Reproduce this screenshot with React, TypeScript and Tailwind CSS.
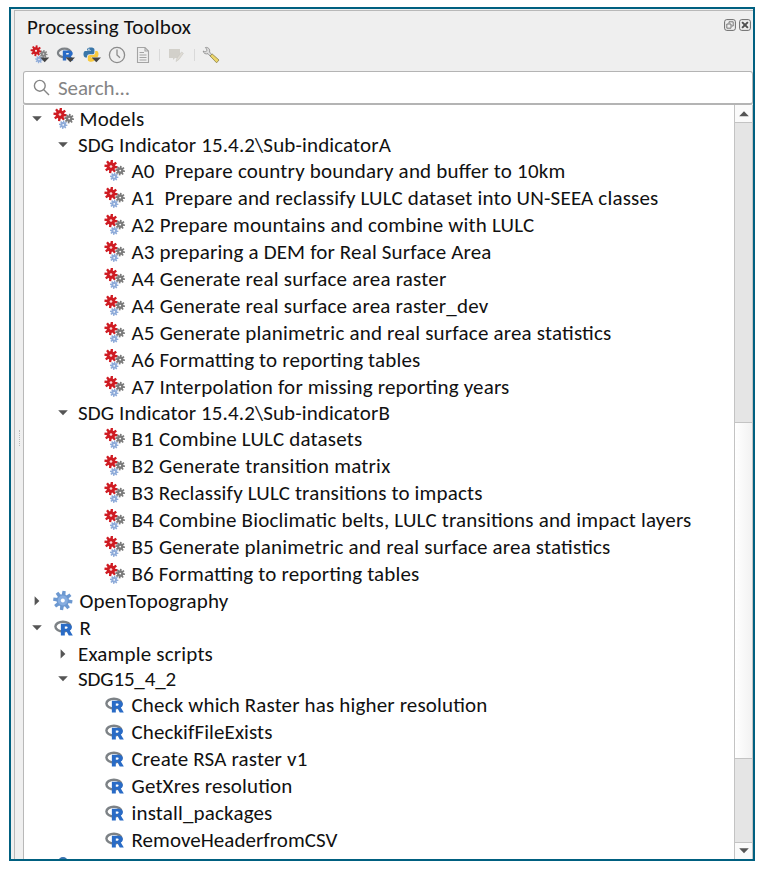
import { useLayoutEffect, useRef } from "react";

type Row = {
  label: string;
  width: number;
  height: string;
  level: 0 | 1 | 2;
  icon: "model" | "gear" | "r" | null;
  arrow?: "down" | "right";
};

const h25 = "h-[25px]";
const h26 = "h-[26px]";
const h27 = "h-[27px]";

const leaf = (icon: "model" | "r", label: string, width: number): Row => ({
  label,
  width,
  height: h27,
  level: 2,
  icon,
});

const rows: Row[] = [
  { label: "Models", width: 65, height: h26, level: 0, icon: "model", arrow: "down" },
  { label: "SDG Indicator 15.4.2\\Sub-indicatorA", width: 313, height: h25, level: 1, icon: null, arrow: "down" },
  leaf("model", "A0  Prepare country boundary and buffer to 10km", 434),
  leaf("model", "A1  Prepare and reclassify LULC dataset into UN-SEEA classes", 527),
  leaf("model", "A2 Prepare mountains and combine with LULC", 403),
  leaf("model", "A3 preparing a DEM for Real Surface Area", 360),
  leaf("model", "A4 Generate real surface area raster", 315),
  leaf("model", "A4 Generate real surface area raster_dev", 357),
  leaf("model", "A5 Generate planimetric and real surface area statistics", 480),
  leaf("model", "A6 Formatting to reporting tables", 289),
  leaf("model", "A7 Interpolation for missing reporting years", 378),
  { label: "SDG Indicator 15.4.2\\Sub-indicatorB", width: 312, height: h25, level: 1, icon: null, arrow: "down" },
  leaf("model", "B1 Combine LULC datasets", 231),
  leaf("model", "B2 Generate transition matrix", 259),
  leaf("model", "B3 Reclassify LULC transitions to impacts", 351),
  leaf("model", "B4 Combine Bioclimatic belts, LULC transitions and impact layers", 560),
  leaf("model", "B5 Generate planimetric and real surface area statistics", 479),
  leaf("model", "B6 Formatting to reporting tables", 288),
  { label: "OpenTopography", width: 149, height: h27, level: 0, icon: "gear", arrow: "right" },
  { label: "R", width: 12, height: h27, level: 0, icon: "r", arrow: "down" },
  { label: "Example scripts", width: 135, height: h25, level: 1, icon: null, arrow: "right" },
  { label: "SDG15_4_2", width: 98, height: h25, level: 1, icon: null, arrow: "down" },
  leaf("r", "Check which Raster has higher resolution", 356),
  leaf("r", "CheckifFileExists", 141),
  leaf("r", "Create RSA raster v1", 176),
  leaf("r", "GetXres resolution", 161),
  leaf("r", "install_packages", 141),
  leaf("r", "RemoveHeaderfromCSV", 206),
];

/* Text whose tracking is adjusted so that it spans the given width. */
function Fit({ text, width }: { text: string; width: number }) {
  const ref = useRef<HTMLSpanElement>(null);
  useLayoutEffect(() => {
    const el = ref.current;
    if (!el) return;
    const apply = () => {
      let spacing = 0;
      el.style.letterSpacing = "0px";
      for (let i = 0; i < 3; i++) {
        spacing += (width - el.getBoundingClientRect().width) / text.length;
        el.style.letterSpacing = `${spacing}px`;
      }
    };
    apply();
    document.fonts.ready.then(apply);
  }, [text, width]);
  return (
    <span ref={ref} className="whitespace-pre [font-feature-settings:'liga'_1]">
      {text}
    </span>
  );
}

function Gear({ cx, cy, r, color, hole, teeth = 8 }: { cx: number; cy: number; r: number; color: string; hole: string; teeth?: number }) {
  return (
    <g transform={`translate(${cx} ${cy})`}>
      {Array.from({ length: teeth }, (_, i) => (
        <path
          key={i}
          d={`M${-r * 0.22} 0L${-r * 0.17} ${-r}H${r * 0.17}L${r * 0.22} 0Z`}
          fill={color}
          transform={`rotate(${(360 / teeth) * i + 8})`}
        />
      ))}
      <circle r={r * 0.65} fill={color} />
      <circle r={r * 0.2} fill={hole} />
    </g>
  );
}

function ModelIcon() {
  return (
    <svg className="h-[22px] w-[22px]" viewBox="0 0 22 22">
      <Gear cx={7} cy={6.5} r={6.6} color="#cf1b22" hole="#f6d5d6" />
      <Gear cx={16.2} cy={10.6} r={4.8} color="#7b7b7b" hole="#fff" />
      <Gear cx={10.2} cy={16.8} r={4.2} color="#8eabd9" hole="#fff" />
    </svg>
  );
}

function GearIcon() {
  return (
    <svg className="h-[22px] w-[22px]" viewBox="0 0 22 22">
      <Gear cx={9.8} cy={10.5} r={9.6} color="#6c98d0" hole="#fff" />
      <circle cx="9.8" cy="10.5" r="5" fill="#86ade0" />
      <circle cx="9.8" cy="10.5" r="2" fill="#fff" />
    </svg>
  );
}

function RIcon() {
  return (
    <svg className="mr-0.5 h-4 w-[19px]" viewBox="0 0 20 17">
      <ellipse cx="9.4" cy="7" rx="8" ry="5.2" fill="none" stroke="#7d8286" strokeWidth="2.6" />
      <path
        d="M7.2 3.9H14.2C17.5 3.9 18.9 5.6 18.9 7.8C18.9 9.5 17.9 10.6 16.7 11.1L19.9 16.6H15.6L13.3 12.1H11.4V16.6H7.2ZM11.4 7V9.2H13.2C14.8 9.2 14.8 7 13.2 7Z"
        fill="#296bc6"
      />
    </svg>
  );
}

function Arrow({ dir }: { dir: "down" | "right" | "up" }) {
  return (
    <svg className="h-[10px] w-[10px]" viewBox="0 0 10 10" fill="#555">
      {dir === "down" && <path d="M.2 2.3H9.8L5 7.3Z" />}
      {dir === "up" && <path d="M.2 7.2H9.8L5 2.2Z" />}
      {dir === "right" && <path d="M2.6 .2V9.6L7.4 4.9Z" />}
    </svg>
  );
}

function Drop() {
  return <path d="M9.6 12.6H19L14.3 17.3Z" fill="#444" />;
}

function Toolbar() {
  return (
    <div className="flex h-6 items-center pl-[15px]">
      <svg className="mr-1.5 h-5 w-5" viewBox="0 0 20 20">
        <Gear cx={6} cy={5.8} r={5.4} color="#cf1b22" hole="#efefef" />
        <Gear cx={13.5} cy={9} r={4} color="#848484" hole="#efefef" />
        <Gear cx={9} cy={14.5} r={3.8} color="#8eabd9" hole="#efefef" />
        <path d="M10.2 12.6H19.2L14.7 17.3Z" fill="#444" />
      </svg>
      <svg className="mr-1.5 h-5 w-5" viewBox="0 0 20 20">
        <ellipse cx="8.5" cy="8" rx="6.6" ry="4.3" fill="none" stroke="#7d8286" strokeWidth="2.2" />
        <path d="M6.8 5.5H13C15.6 5.5 16.7 6.9 16.7 8.5C16.7 9.8 15.9 10.7 14.9 11.1L17.3 15.6H14L12 12H10.2V15.6H6.8ZM10.2 8V9.6H12C13.3 9.6 13.3 8 12 8Z" fill="#296bc6" />
        <Drop />
      </svg>
      <svg className="mr-1.5 h-5 w-5" viewBox="0 0 20 20">
        <path d="M5.1 4.3C5.1 2 12.4 1.9 12.4 4.3V7.2C12.4 9.1 11.2 9.3 10 9.3H7.4C5.7 9.3 5 10.2 5 12.4H3.3C.9 12.4 .9 6.1 3.3 6.1H9V5.4H5.1Z" fill="#3a76a8" />
        <path d="M13.2 6H14.7C17.2 6 17.1 12.3 14.7 12.3H9.2V13.1H12.6V15.1C12.6 17.4 5.8 17.4 5.8 15V12.2C5.8 10.8 6.7 10 8 10H10.9C12.5 10 13.2 8.9 13.2 7.5Z" fill="#f8c93d" />
        <circle cx="6.9" cy="4.2" r=".7" fill="#fff" />
        <Drop />
      </svg>
      <svg className="mr-2 h-[18px] w-[18px]" viewBox="0 0 18 18" fill="none" stroke="#8b8b8b" strokeWidth="1.3">
        <circle cx="9" cy="9" r="7.6" />
        <path d="M9 3.5V9L12 11.8" />
      </svg>
      <svg className="mr-[7px] h-[18px] w-[18px]" viewBox="0 0 18 18" fill="none" stroke="#a4a4a4" strokeWidth="1.1">
        <path d="M3.5 1.5H11L14.5 5V16.5H3.5ZM11 1.5V5H14.5M5.5 6.5H10M5.5 9H12.5M5.5 11.5H12.5M5.5 14H12.5" />
      </svg>
      <span className="h-3 w-px bg-[#d9d9d9]" />
      <svg className="mr-[9px] ml-[7px] h-[18px] w-[18px]" viewBox="0 0 18 18">
        <path d="M2 3H13V12H8L6 14V12H2Z" fill="#d2d0ca" />
        <path d="M9 15.5L10 12L14.5 6L16.4 7.3L12 13.4Z" fill="#dedbd4" stroke="#c8c6c1" strokeWidth=".6" />
      </svg>
      <span className="h-3 w-px bg-[#d9d9d9]" />
      <svg className="ml-[7px] h-[18px] w-[18px]" viewBox="0 0 18 18">
        <path d="M1.2 5C3 6.2 4.6 5.6 4.8 4.6C5 3.5 4 2.2 3.4 1.5C6 .9 8.4 3.1 7.5 6L10.2 9L8.5 10.5L6 7.7C3.6 8.5 1.4 7.3 1.2 5Z" fill="#ddd" stroke="#888" strokeWidth=".8" />
        <path d="M8 9.9L10.2 8L17 14L14.6 16.8Z" fill="#ecd56a" stroke="#8b8149" strokeWidth=".8" />
      </svg>
    </div>
  );
}

function TreeRow({ row }: { row: Row }) {
  const pad = row.level === 0 ? "pl-[7.5px]" : row.level === 1 ? "pl-[33.5px]" : "pl-[80px]";
  return (
    <div className={`flex shrink-0 items-center ${row.height} ${pad}`}>
      {row.arrow && (
        <span className={row.level === 0 ? "mr-[11.5px]" : "mr-[10.5px]"}>
          <Arrow dir={row.arrow} />
        </span>
      )}
      {row.icon && (
        <span className={`flex w-[22px] shrink-0 justify-center ${row.level === 0 ? "mr-[4.5px]" : "mr-[5.5px]"}`}>
          {row.icon === "model" ? <ModelIcon /> : row.icon === "gear" ? <GearIcon /> : <RIcon />}
        </span>
      )}
      <Fit text={row.label} width={row.width} />
    </div>
  );
}

export default function App() {
  return (
    <div className="h-[871px] w-[766px] overflow-hidden bg-white pt-[7px] pl-[9px] font-['Calibri','Carlito','Lato',sans-serif] text-[21px] leading-[22px] text-[#111]">
      <div className="flex h-[854px] w-[746px] border-2 border-[#006080] bg-[#efefef]">
        <div className="w-[3px] shrink-0" />
        <div className="flex min-w-0 flex-1 flex-col pt-px">
          <div className="flex min-h-0 flex-1 flex-col border-t border-l border-[#b8b8b8]">
            <div className="flex h-[32px] items-center justify-between pr-0.5 pl-3">
              <Fit text="Processing Toolbox" width={164} />
              <div className="mb-1 flex gap-[3px]">
                <svg className="h-3 w-3" viewBox="0 0 12 12" fill="none" stroke="#6b6b6b">
                  <rect x=".6" y=".6" width="10.8" height="10.8" rx="2.2" />
                  <path d="M5 4.5V2.8H9.2V7H7.5M2.8 5H7V9.2H2.8Z" strokeWidth=".9" />
                </svg>
                <svg className="h-3 w-3" viewBox="0 0 12 12" fill="none" stroke="#6b6b6b">
                  <rect x=".6" y=".6" width="10.8" height="10.8" rx="2.2" />
                  <path d="M3.1 3.1L8.9 8.9M8.9 3.1L3.1 8.9" stroke="#505050" strokeWidth="2" />
                </svg>
              </div>
            </div>
            <Toolbar />
            <div className="mt-[4px] ml-2 flex h-[34px] shrink-0 items-center rounded-[3px] border border-b-2 border-[#b4b4b4] bg-white pl-[9px] text-[#858585]">
              <svg className="mr-2 h-[17px] w-[17px]" viewBox="0 0 17 17" fill="none" stroke="#858585" strokeWidth="1.4">
                <circle cx="6.8" cy="6.8" r="5.4" />
                <path d="M10.8 10.8L16 16" />
              </svg>
              <Fit text="Search..." width={72} />
            </div>
            <div className="flex min-h-0 flex-1">
              <div className="flex w-[8px] shrink-0 flex-col items-center pt-[325px]">
                <div className="h-4 border-l border-dotted border-[#bcbcbc]" />
              </div>
              <div className="flex min-w-0 flex-1 border-l border-[#b8b8b8] bg-white">
                <div className="flex min-w-0 flex-1 flex-col overflow-hidden pt-px">
                  {rows.map((row) => (
                    <TreeRow key={row.label} row={row} />
                  ))}
                  <div className="ml-[34px] shrink-0 pt-1">
                    <div className="h-[10px] w-[10px] rounded-full bg-[#3972ae]" />
                  </div>
                </div>
                <div className="flex w-[19px] shrink-0 flex-col border-r border-l border-[#c3c3c3] bg-[#e5e5e5]">
                  <div className="flex h-[18px] items-center justify-center border-b border-[#c3c3c3] bg-[#fafafa]">
                    <Arrow dir="up" />
                  </div>
                  <div className="h-[299px]" />
                  <div className="h-[337px] border-y border-[#c3c3c3] bg-linear-to-r from-white to-[#f2f2f2]" />
                  <div className="flex-1" />
                  <div className="flex h-[17px] items-center justify-center border-t border-[#c3c3c3] bg-[#fafafa]">
                    <Arrow dir="down" />
                  </div>
                </div>
              </div>
            </div>
          </div>
        </div>
      </div>
    </div>
  );
}
